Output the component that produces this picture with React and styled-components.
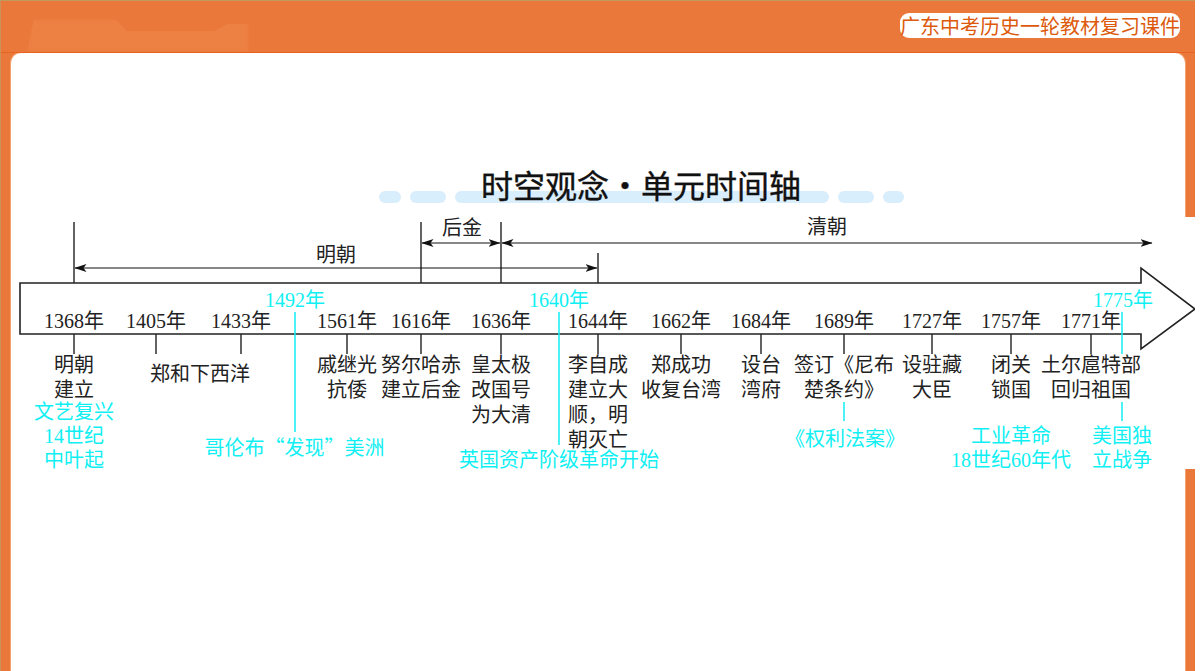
import React from "react";
import styled, { createGlobalStyle } from "styled-components";

const OFFSET_X = 11;
const OFFSET_Y = 217;

const GlobalStyle = createGlobalStyle`
  html, body {
    margin: 0;
    padding: 0;
    background: #fff;
  }
`;

const Frame = styled.div`
  position: relative;
  display: flex;
  flex-direction: column;
  box-sizing: border-box;
  width: 1195px;
  height: 671px;
  overflow: hidden;
  background: #e9783a;
  border-top: 1px solid #c09a5c;
  border-left: 1px solid #c8925a;
`;

const Header = styled.header`
  position: relative;
  display: flex;
  flex: 0 0 52px;
  box-sizing: border-box;
  justify-content: flex-end;
  padding: 12px 15px 0 0;
  border-bottom: 1px solid #e8641e;
`;

const Glow = styled.div`
  position: absolute;
  left: 26px;
  bottom: 0;
  width: 222px;
  height: 33px;
  background: #ed8043;
  filter: blur(2px);
  clip-path: polygon(3% 0, 40% 0, 45% 36%, 84% 36%, 90% 15%, 100% 15%, 100% 100%, 0 100%);
`;

const Badge = styled.div`
  width: 280px;
  height: 25px;
  background: #fff;
  border-radius: 9px;
  color: #dd5a0c;
  font: 20px/25px "Noto Sans CJK SC", sans-serif;
  white-space: nowrap;
  text-align: center;
`;

const Sheet = styled.main`
  flex: 0 0 609px;
  margin: 0 10px 0 10px;
  padding-top: 115px;
  background: #fff;
  border-radius: 10px;
  box-shadow: 0 0 0 1px #f6a06c;
`;

const TitleBlock = styled.div`
  display: grid;
  height: 49px;
  padding-left: 86px;
  justify-items: center;
`;

const PillRow = styled.div`
  grid-area: 1 / 1;
  display: flex;
  gap: 9px;
  margin-top: 23px;
  height: 12px;
`;

const Pill = styled.span`
  display: block;
  width: ${(p) => p.$width}px;
  height: 12px;
  border-radius: 6px;
  background: #d9eefc;
`;

const Title = styled.h1`
  grid-area: 1 / 1;
  position: relative;
  margin: -6px 0 0;
  color: #111;
  font: 400 32px/44px "Noto Sans CJK SC", sans-serif;
  -webkit-text-stroke: 0.4px #111;
  white-space: nowrap;
`;

const TitleDot = styled.span`
  display: inline-block;
  width: 32px;
  text-align: center;
`;

const Canvas = styled.section`
  position: relative;
  width: 1184px;
  height: 252px;
  background: #fff;
`;

const Drawing = styled.svg`
  position: absolute;
  inset: 0;
  display: block;
`;

const Text = styled.div`
  position: absolute;
  left: ${(p) => p.$x - OFFSET_X}px;
  top: ${(p) => p.$y - OFFSET_Y - (p.$cyan ? 12 : 12.5)}px;
  transform: translateX(-50%);
  color: ${(p) => (p.$cyan ? "#10eff3" : "#222")};
  font-family: "Liberation Serif", "Noto Sans CJK SC", sans-serif;
  font-size: 20px;
  line-height: ${(p) => (p.$cyan ? 24 : 25)}px;
  text-align: center;
  white-space: nowrap;
`;

const Quote = styled.span`
  font-family: "Noto Sans CJK SC", sans-serif;
`;

const pills = [22, 36, 374, 36, 21];

const years = [
  [74, "1368年"], [156, "1405年"], [241, "1433年"], [347, "1561年"],
  [421, "1616年"], [501, "1636年"], [598, "1644年"], [681, "1662年"],
  [761, "1684年"], [844, "1689年"], [932, "1727年"], [1011, "1757年"],
  [1091, "1771年"],
];

const cyanYears = [
  [295, "1492年"], [559, "1640年"], [1123, "1775年"],
];

const periods = [
  [336, 255, "明朝"], [462, 228, "后金"], [827, 227, "清朝"],
];

const events = [
  [74, 365, ["明朝", "建立"]],
  [200, 374, ["郑和下西洋"]],
  [347, 365, ["戚继光", "抗倭"]],
  [421, 365, ["努尔哈赤", "建立后金"]],
  [501, 365, ["皇太极", "改国号", "为大清"]],
  [598, 365, ["李自成", "建立大", "顺，明", "朝灭亡"]],
  [681, 365, ["郑成功", "收复台湾"]],
  [761, 365, ["设台", "湾府"]],
  [844, 365, ["签订《尼布", "楚条约》"]],
  [932, 365, ["设驻藏", "大臣"]],
  [1011, 365, ["闭关", "锁国"]],
  [1091, 365, ["土尔扈特部", "回归祖国"]],
];

const worldEvents = [
  [74, 412, ["文艺复兴", "14世纪", "中叶起"]],
  [559, 460, ["英国资产阶级革命开始"]],
  [845, 439, ["《权利法案》"]],
  [1011, 436, ["工业革命", "18世纪60年代"]],
  [1122, 436, ["美国独", "立战争"]],
];

const ticks = [74, 156, 241, 347, 421, 501, 598, 681, 761, 844, 932, 1011, 1091];

const cyanLines = [
  [295, 312, 432], [559, 312, 445], [1122, 312, 354], [1122, 402, 421], [844, 402, 421],
];

function Lines({ items }) {
  return items.map((line, i) => <div key={i}>{line}</div>);
}

function TimelineDrawing() {
  return (
    <Drawing width="1184" height="252" viewBox={`${OFFSET_X} ${OFFSET_Y} 1184 252`}>
      <defs>
        <marker id="head" viewBox="0 0 12 8" refX="11.5" refY="4" markerWidth="12" markerHeight="8" markerUnits="userSpaceOnUse" orient="auto-start-reverse">
          <path d="M0 0 L12 4 L0 8 L3 4 Z" fill="#111" />
        </marker>
      </defs>
      <path d="M20 283 H1141 V268 L1195 309 L1141 349 V334 H20 Z" fill="#fff" stroke="#222" strokeWidth="1.6" />
      <g stroke="#222" strokeWidth="1.4" fill="none">
        <path d="M74 222 V283 M421 222 V283 M501 222 V283 M598 253 V283" />
        {ticks.map((x) => (
          <path key={x} d={`M${x} 334 V354`} />
        ))}
      </g>
      <g stroke="#111" strokeWidth="1.2">
        <line x1="75" y1="268" x2="597" y2="268" markerStart="url(#head)" markerEnd="url(#head)" />
        <line x1="422" y1="243" x2="500" y2="243" markerStart="url(#head)" markerEnd="url(#head)" />
        <line x1="502" y1="243" x2="1152" y2="243" markerStart="url(#head)" markerEnd="url(#head)" />
      </g>
      <g stroke="#10eff3" strokeWidth="1.5">
        {cyanLines.map(([x, y1, y2]) => (
          <line key={`${x}-${y1}`} x1={x} y1={y1} x2={x} y2={y2} />
        ))}
      </g>
    </Drawing>
  );
}

export default function App() {
  return (
    <>
      <GlobalStyle />
      <Frame>
        <Header>
          <Glow />
          <Badge>广东中考历史一轮教材复习课件</Badge>
        </Header>
        <Sheet>
          <TitleBlock>
            <PillRow>
              {pills.map((w, i) => (
                <Pill key={i} $width={w} />
              ))}
            </PillRow>
            <Title>时空观念<TitleDot>·</TitleDot>单元时间轴</Title>
          </TitleBlock>
          <Canvas>
            <TimelineDrawing />
            {periods.map(([x, y, label]) => (
              <Text key={label} $x={x} $y={y}>{label}</Text>
            ))}
            {years.map(([x, label]) => (
              <Text key={label} $x={x} $y={321}>{label}</Text>
            ))}
            {cyanYears.map(([x, label]) => (
              <Text key={label} $x={x} $y={300} $cyan>{label}</Text>
            ))}
            {events.map(([x, y, lines]) => (
              <Text key={lines[0]} $x={x} $y={y}>
                <Lines items={lines} />
              </Text>
            ))}
            {worldEvents.map(([x, y, lines]) => (
              <Text key={lines[0]} $x={x} $y={y} $cyan>
                <Lines items={lines} />
              </Text>
            ))}
            <Text $x={294.5} $y={447} $cyan>
              哥伦布<Quote>“</Quote>发现<Quote>”</Quote>美洲
            </Text>
          </Canvas>
        </Sheet>
      </Frame>
    </>
  );
}
